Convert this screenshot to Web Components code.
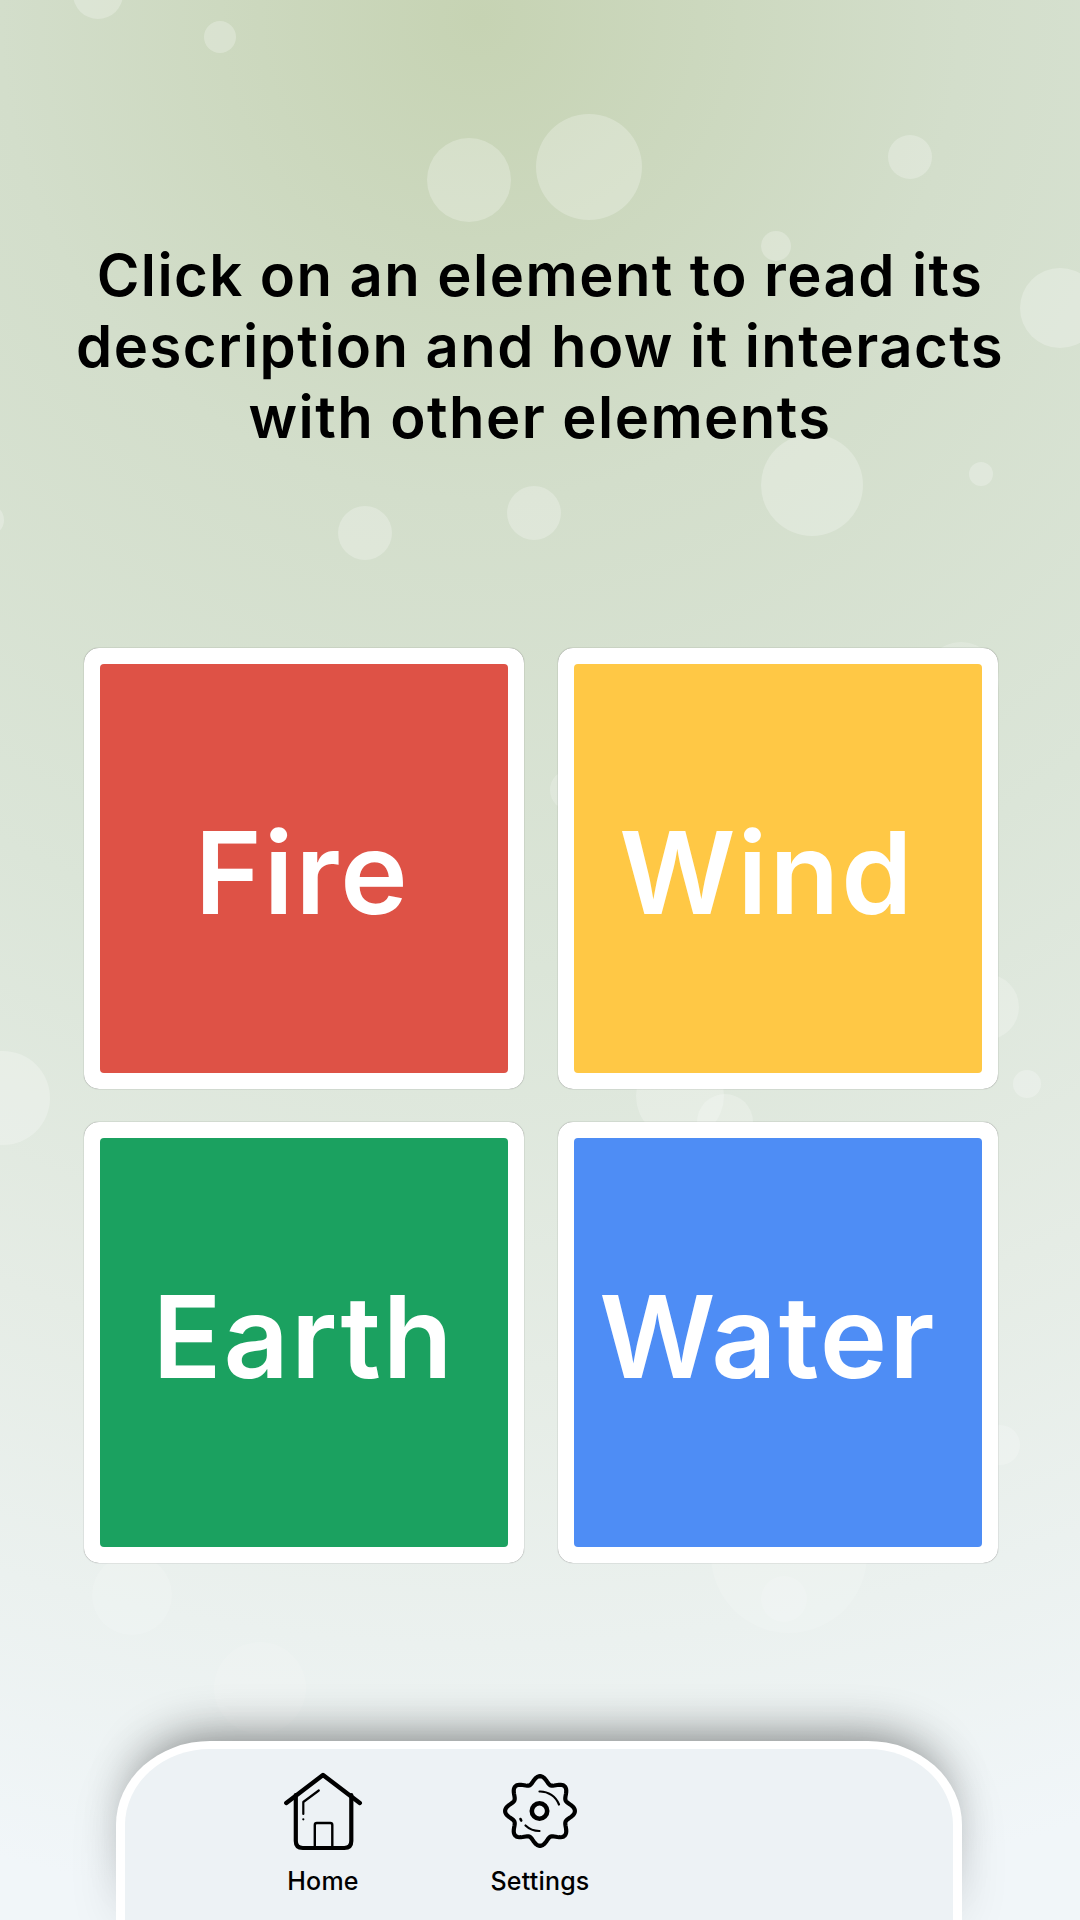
<!DOCTYPE html>
<html>
<head>
<meta charset="utf-8">
<title>Elements</title>
<style>
    html, body{ margin:0; padding:0; }
    body{ font-family:Inter,Roboto,sans-serif; }
</style>
</head>
<body>
<app-page>
    <page-title>Click on an element to read its<br>description and how it interacts<br>with other elements</page-title>
    <element-grid>
        <element-tile colour="#de5246" nudge="4" drop="21">Fire</element-tile>
        <element-tile colour="#ffc845" nudge="22" drop="21">Wind</element-tile>
        <element-tile colour="#1ba160" nudge="1" drop="0">Earth</element-tile>
        <element-tile colour="#4e8df5" nudge="20" drop="0">Water</element-tile>
    </element-grid>
    <nav-bar>
        <nav-item icon="home">Home</nav-item>
        <nav-item icon="settings">Settings</nav-item>
    </nav-bar>
</app-page>

<script>
customElements.define('bubble-field', class extends HTMLElement {
    connectedCallback(){
        if(this.shadowRoot) return;
        // x, y, radius, opacity as read off the reference
        const bubbles = [
            [98,-6,25,.25],[220,37,16,.25],[469,180,42,.25],[589,167,53,.25],[910,157,22,.25],[776,246,15,.25],
            [1060,308,40,.25],[812,485,51,.25],[981,474,12,.25],[534,513,27,.25],[365,533,27,.25],[-12,520,16,.25],
            [3,1098,47,.25],[1027,1084,14,.25],[680,1096,44,.22],[725,1122,28,.22],[986,1007,33,.22],
            [961,680,38,.2],[570,790,20,.2],[1000,1445,20,.2],[789,1555,78,.14],[784,1599,23,.14],[132,1595,40,.14],[260,1688,46,.12]
        ];
        let shadow = this.attachShadow({mode:"open"});
        shadow.innerHTML = `
            <style>
                :host{ position:absolute; inset:0; display:block; overflow:hidden; }
                i{ position:absolute; border-radius:50%; background:#fff; }
            </style>` + bubbles.map(b =>
                `<i style="left:${b[0]-b[2]}px;top:${b[1]-b[2]}px;width:${b[2]*2}px;height:${b[2]*2}px;opacity:${b[3]}"></i>`
            ).join("");
    }
});

customElements.define('app-page', class extends HTMLElement {
    connectedCallback(){
        if(this.shadowRoot) return;
        let shadow = this.attachShadow({mode:"open"});
        shadow.innerHTML = `
            <style>
                :host{
                    display:flex; flex-direction:column; position:relative;
                    width:1080px; height:1920px; overflow:hidden;
                    background:radial-gradient(circle 1950px at 480px 20px,#c6d3b3 0,#d3decb 480px,#dbe5d8 950px,#e5ece5 1350px,#f1f6f9 1900px);
                }
                .content{ position:relative; display:flex; flex-direction:column; flex:1; }
            </style>
            <bubble-field></bubble-field>
            <div class="content"><slot></slot></div>`;
    }
});

customElements.define('page-title', class extends HTMLElement {
    connectedCallback(){
        if(this.shadowRoot) return;
        let shadow = this.attachShadow({mode:"open"});
        shadow.innerHTML = `
            <style>
                :host{
                    display:block; box-sizing:border-box; height:647.7px; padding-top:240px;
                    text-align:center; color:#000; letter-spacing:1.45px;
                    font:600 58px/71px Inter,Roboto,sans-serif;
                }
            </style>
            <slot></slot>`;
    }
});

customElements.define('element-grid', class extends HTMLElement {
    connectedCallback(){
        if(this.shadowRoot) return;
        let shadow = this.attachShadow({mode:"open"});
        shadow.innerHTML = `
            <style>
                :host{
                    display:grid; grid-template-columns:439.7px 439.7px; grid-auto-rows:441px;
                    gap:33px 34px; padding-left:84.3px;
                }
            </style>
            <slot></slot>`;
    }
});

customElements.define('element-tile', class extends HTMLElement {
    connectedCallback(){
        if(this.shadowRoot) return;
        let shadow = this.attachShadow({mode:"open"});
        shadow.innerHTML = `
            <style>
                :host{
                    display:block; box-sizing:border-box; padding:16px;
                    background:#fff; border-radius:15px;
                    box-shadow:0 0 1px rgba(0,0,0,.6);
                }
                .face{
                    display:flex; align-items:center; justify-content:center;
                    height:100%; box-sizing:border-box; padding-bottom:11px;
                    border-radius:4px; background:var(--colour);
                    color:#fff; letter-spacing:2px;
                    font:600 114px/1 Inter,Roboto,sans-serif;
                }
            </style>
            <div class="face"><slot></slot></div>`;
        let face = shadow.querySelector(".face");
        face.style.setProperty("--colour", this.getAttribute("colour"));
        face.style.paddingRight = this.getAttribute("nudge") + "px";
        face.style.paddingTop = this.getAttribute("drop") + "px";
    }
});

customElements.define('nav-bar', class extends HTMLElement {
    connectedCallback(){
        if(this.shadowRoot) return;
        let shadow = this.attachShadow({mode:"open"});
        shadow.innerHTML = `
            <style>
                :host{
                    display:flex; box-sizing:border-box; width:846px; height:179px;
                    margin:auto 0 0 116px; padding:2px 0 0 118px; gap:57px;
                    background:#edf2f5; border:9px solid #fff; border-top-width:8px; border-bottom:0;
                    border-radius:94px 94px 0 0 / 84px 84px 0 0;
                    box-shadow:0 -26px 50px -24px rgba(0,0,0,.45), 0 0 50px rgba(0,0,0,.1);
                }
            </style>
            <slot></slot>`;
    }
});

customElements.define('nav-item', class extends HTMLElement {
    gearPath(){
        // eight round lobes
        let d = "";
        for(let i = 0; i <= 160; i++){
            let a = i / 160 * Math.PI * 2;
            let r = 31.3 + 3.6 * Math.cos(8 * a);
            let x = 60 + r * Math.sin(a), y = 60 - r * Math.cos(a);
            d += (i ? "L" : "M") + x.toFixed(2) + " " + y.toFixed(2);
        }
        return d + "Z";
    }
    connectedCallback(){
        if(this.shadowRoot) return;
        const home = `
            <svg viewBox="3.7 0 120 110" width="120" height="110" fill="none" stroke="#000" stroke-linecap="round" stroke-linejoin="round">
                <path stroke-width="4.4" d="M27 52 63.7 24 100.5 52"/>
                <path stroke-width="4.2" d="M36.5 44V90q0 7 7 7H85q7 0 7-7V44"/>
                <path stroke-width="2.4" d="M55.5 97V74q0-2 2-2H71q2 0 2 2V97"/>
                <path stroke-width="2.2" d="M59.5 39.5 44 51V63M44 68.3h.01"/>
            </svg>`;
        const gear = `
            <svg viewBox="0 0 120 110" width="120" height="110" fill="none" stroke="#000" stroke-linecap="round" stroke-linejoin="round">
                <path stroke-width="4.2" d="${this.gearPath()}"/>
                <circle cx="59.5" cy="60" r="7.7" stroke-width="4.6"/>
                <path stroke-width="2.2" d="M59.5 40.5A20 20 0 0 1 79 53.5M45.5 74.5A20 20 0 0 0 59.5 80"/>
                <path stroke-width="2.6" d="M40.5 68l.7 1.6"/>
            </svg>`;
        let shadow = this.attachShadow({mode:"open"});
        shadow.innerHTML = `
            <style>
                :host{
                    display:flex; flex-direction:column; align-items:center; width:160px;
                    color:#000; letter-spacing:.2px;
                    font:500 25px/30px Inter,Roboto,sans-serif;
                }
                svg{ display:block; margin-bottom:5px; }
            </style>
            ${this.getAttribute("icon") === "home" ? home : gear}
            <slot></slot>`;
    }
});
</script>
</body>
</html>
